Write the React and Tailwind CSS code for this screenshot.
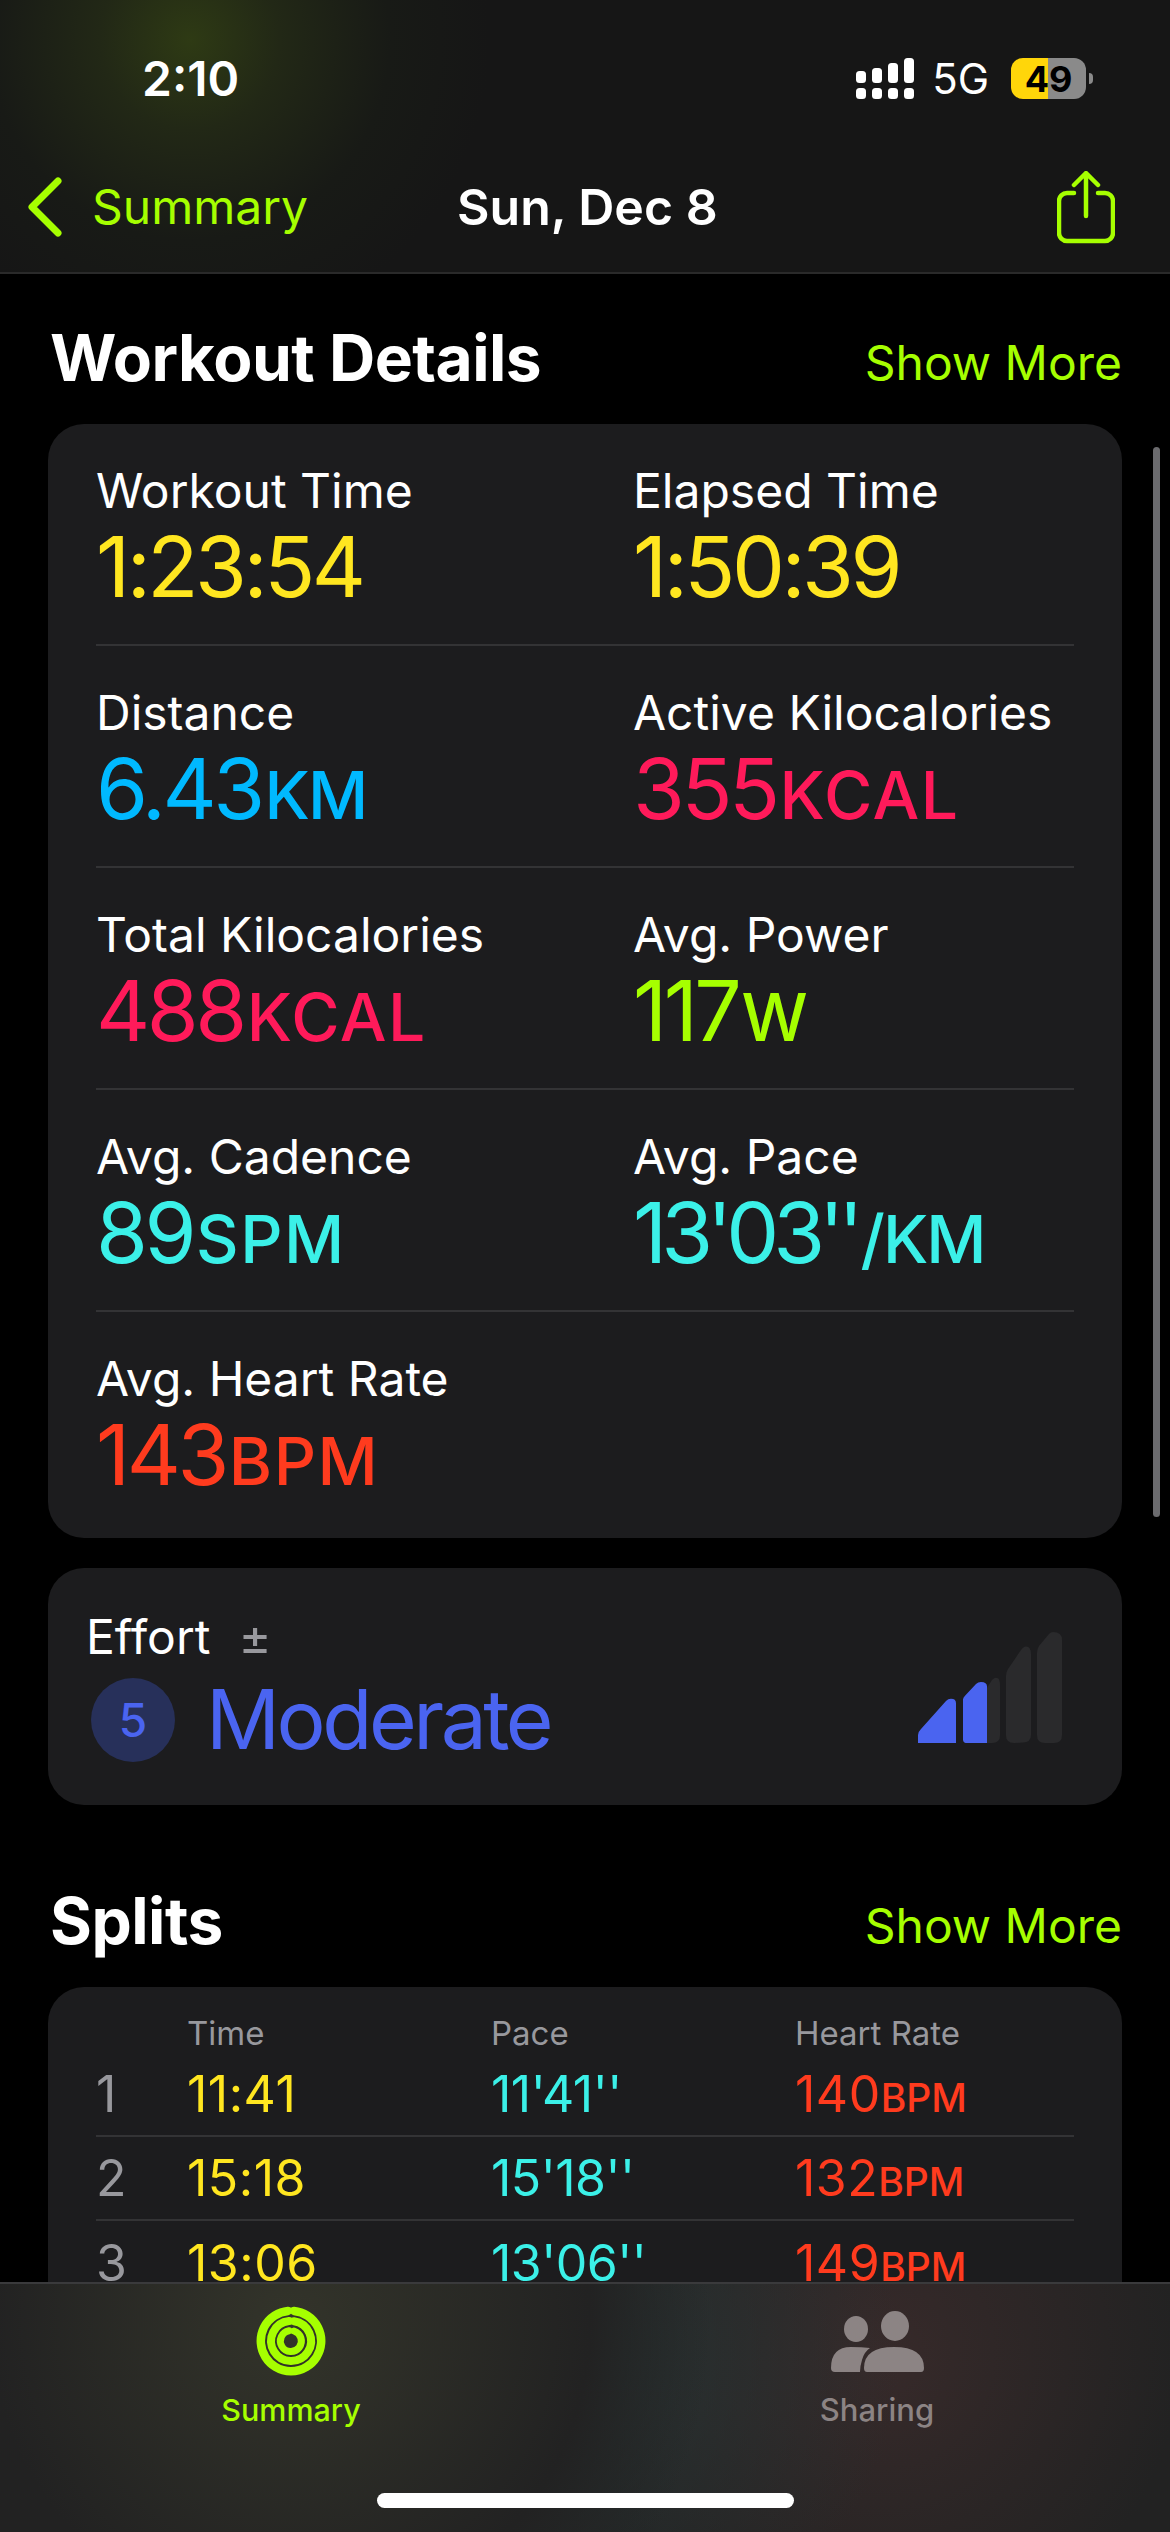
import React from 'react';

const metrics = [
  [
    { label: 'Workout Time', value: '1:23:54', color: 'text-[#ffe620]' },
    { label: 'Elapsed Time', value: '1:50:39', color: 'text-[#ffe620]' },
  ],
  [
    { label: 'Distance', value: '6.43', unit: 'KM', color: 'text-[#00b9ff]', unitTight: true },
    { label: 'Active Kilocalories', value: '355', unit: 'KCAL', color: 'text-[#ff1a5a]' },
  ],
  [
    { label: 'Total Kilocalories', value: '488', unit: 'KCAL', color: 'text-[#ff1a5a]' },
    { label: 'Avg. Power', value: '117', unit: 'W', color: 'text-[#a6ff00]' },
  ],
  [
    { label: 'Avg. Cadence', value: '89', unit: 'SPM', color: 'text-[#3bf0e8]' },
    { label: 'Avg. Pace', value: "13'03''", unit: '/KM', color: 'text-[#3bf0e8]', tight: true, unitTight: true },
  ],
  [{ label: 'Avg. Heart Rate', value: '143', unit: 'BPM', color: 'text-[#ff3b1e]' }],
];

const splits = [
  { n: 1, time: '11:41', pace: "11'41''", hr: '140' },
  { n: 2, time: '15:18', pace: "15'18''", hr: '132' },
  { n: 3, time: '13:06', pace: "13'06''", hr: '149' },
];

function SignalIcon() {
  return (
    <svg width="58" height="41" viewBox="0 0 58 41" fill="white">
      <rect x="0" y="13" width="10" height="12" rx="3.5" />
      <rect x="16" y="10" width="10" height="15" rx="3.5" />
      <rect x="32" y="5" width="10" height="20" rx="3.5" />
      <rect x="48" y="0" width="10" height="25" rx="3.5" />
      <rect x="0" y="30" width="10" height="11" rx="3.5" />
      <rect x="16" y="30" width="10" height="11" rx="3.5" />
      <rect x="32" y="30" width="10" height="11" rx="3.5" />
      <rect x="48" y="30" width="10" height="11" rx="3.5" />
    </svg>
  );
}

function ShareIcon() {
  return (
    <svg width="58" height="73" viewBox="0 0 58 73" fill="none" stroke="#a6ff00" strokeWidth="4.5" strokeLinecap="round" strokeLinejoin="round">
      <path d="M17 22H10a8 8 0 0 0-8 8v32a8 8 0 0 0 8 8h38a8 8 0 0 0 8-8V30a8 8 0 0 0-8-8h-7" />
      <path d="M29 45V3M17 14 29 2l12 12" />
    </svg>
  );
}

function EffortBars() {
  return (
    <svg width="144" height="111" viewBox="0 0 144 111">
      <g fill="#2a2a2c">
        <path d="M60 111V70l14-22q3-3 5-2 3 0 3 8v49q0 8-8 8z" />
        <path d="M96 111q-8 0-8-8V44q0-4 2-7l13-19q3-4 5-3.500 5 0 5 8v80q0 8-8 8z" />
        <path d="M127 111q-8 0-8-8V21q0-4 2-7l10-12q2-2 4-2 9 0 9 8v95q0 8-8 8z" />
      </g>
      <path d="M0 111V100q0-4 3-8l25-38q2-3 5-3 5 0 5 6v54z" fill="#4a64f0" transform="translate(0 29) scale(1 0.74)" />
      <path d="M49 111q-4 0-4-6V44q0-3 2-6l11-18q2-3 5-3 6 0 6 7v87z" fill="#4a64f0" transform="translate(0 39) scale(1 0.65)" />
    </svg>
  );
}

function RingsIcon() {
  return (
    <svg width="70" height="70" viewBox="0 0 70 70" fill="none" stroke="#a6ff00" strokeLinecap="round">
      <path d="M38 4.9A30.200 30.200 0 1 1 32 4.900" strokeWidth="8.500" />
      <path d="M38 15.200A20 20 0 1 1 33 15.100" strokeWidth="8" />
      <path d="M38 25A10.500 10.500 0 1 1 33 24.700" strokeWidth="7" />
    </svg>
  );
}

function PeopleIcon() {
  return (
    <svg width="93" height="61" viewBox="0 0 93 61" fill="#8c8484">
      <ellipse cx="25" cy="18" rx="12" ry="13" />
      <ellipse cx="64" cy="15" rx="14" ry="15" />
      <path d="M39 37q-6 4-8 12-2 6-2 12H4q-4 0-4-4 0-21 20-21 11 0 19 1z" />
      <path d="M36 61q-3 0-3-4 0-21 30-21t30 21q0 4-3 4z" />
    </svg>
  );
}

function Metric({ label, value, unit, color, tight, unitTight }) {
  return (
    <div className="min-w-0">
      <div className="text-[48px] leading-[52px] text-white">{label}</div>
      <div className={`mt-[5px] flex items-baseline text-[84px] leading-[90px] ${tight ? 'tracking-[-6px]' : 'tracking-[-3.5px]'} ${color}`}>
        <span>{value}</span>
        {unit && <span className={`ml-[3px] text-[66px] font-medium ${unitTight ? 'tracking-[-2px]' : 'tracking-[1.5px]'}`}>{unit}</span>}
      </div>
    </div>
  );
}

export default function App() {
  return (
    <div className="relative flex h-[2532px] w-[1170px] flex-col overflow-hidden bg-black font-['Inter',sans-serif]">
      <header className="h-[274px] shrink-0 border-b-2 border-[#2a2a2a] bg-[#161616] bg-[radial-gradient(circle_at_190px_40px,#2e3a14_0,#222816_90px,#181a16_200px,#161616_300px)]">
        <div className="flex h-[157px] items-center justify-between pl-[142px] pr-[77px]">
          <span className="text-[48px] font-semibold leading-none text-white">2:10</span>
          <div className="flex items-center">
            <SignalIcon />
            <span className="ml-[18px] text-[42px] leading-none text-white">5G</span>
            <div className="ml-[22px] flex h-[41px] w-[75px] items-center justify-center rounded-[12px] bg-[linear-gradient(90deg,#ffd60a_49%,#8a8a8a_49%)] text-[36px] font-bold leading-none text-black">49</div>
            <div className="ml-[3px] h-[11px] w-[4px] rounded-r-full bg-[#8a8a8a]" />
          </div>
        </div>
        <div className="flex h-[100px] items-center justify-between pl-[28px] pr-[55px]">
          <div className="flex w-[300px] items-center">
            <svg width="34" height="60" viewBox="0 0 34 60" fill="none" stroke="#a6ff00" strokeWidth="7" strokeLinecap="round" strokeLinejoin="round">
              <path d="M30 4 4 30l26 26" />
            </svg>
            <span className="ml-[30px] text-[48px] leading-none text-[#a6ff00]">Summary</span>
          </div>
          <span className="ml-[129px] text-[50px] font-semibold leading-none text-white">Sun, Dec 8</span>
          <div className="ml-auto"><ShareIcon /></div>
        </div>
      </header>

      <main className="flex-1 overflow-hidden px-[48px] pt-[48px]">
        <div className="flex h-[72px] items-center justify-between pl-[2px]">
          <h2 className="text-[64px] font-bold leading-[72px] tracking-[-0.5px] text-white">Workout Details</h2>
          <span className="translate-y-[5px] text-[48px] leading-[72px] text-[#a6ff00]">Show More</span>
        </div>

        <section className="mt-[30px] rounded-[36px] bg-[#1c1c1e] px-[48px] pb-[4px]">
          {metrics.map((row, i) => (
            <div key={row[0].label} className={`grid h-[222px] grid-cols-[537px_1fr] items-start pt-[41px] ${i < metrics.length - 1 ? 'border-b-2 border-[#333335]' : ''}`}>
              {row.map((m) => (
                <Metric key={m.label} {...m} />
              ))}
            </div>
          ))}
        </section>

        <section className="mt-[30px] flex h-[237px] items-end justify-between rounded-[36px] bg-[#1c1c1e] pb-[43px] pl-[38px] pr-[60px]">
          <div>
            <div className="flex items-center text-[48px] leading-[54px] text-white">
              Effort
              <span className="ml-[28px] text-[50px] leading-none text-[#98989d]">±</span>
            </div>
            <div className="mt-[14px] flex items-center">
              <div className="ml-[5px] flex h-[84px] w-[84px] items-center justify-center rounded-full bg-[#27305a] text-[46px] font-medium leading-none text-[#4a64f0]">5</div>
              <span className="ml-[31px] text-[82px] leading-[84px] tracking-[-3.5px] text-[#4a64f0]">Moderate</span>
            </div>
          </div>
          <div className="mb-[19px]"><EffortBars /></div>
        </section>

        <div className="mt-[80px] flex h-[72px] items-center justify-between pl-[2px]">
          <h2 className="text-[64px] font-bold leading-[72px] tracking-[-0.5px] text-white">Splits</h2>
          <span className="translate-y-[5px] text-[48px] leading-[72px] text-[#a6ff00]">Show More</span>
        </div>

        <section className="mt-[30px] rounded-[36px] bg-[#1c1c1e] px-[48px] pb-[40px] pt-[26px]">
          <div className="grid grid-cols-[91px_304px_304px_1fr] text-[33px] leading-[40px] text-[#98989d]">
            <span />
            <span>Time</span>
            <span>Pace</span>
            <span>Heart Rate</span>
          </div>
          {splits.map((s, i) => (
            <div key={s.n} className={`grid h-[84px] grid-cols-[91px_304px_304px_1fr] items-center text-[50px] leading-none tracking-[0.5px] ${i < splits.length - 1 ? 'border-b-2 border-[#333335]' : ''}`}>
              <span className="text-[#98989d]">{s.n}</span>
              <span className="text-[#ffe620]">{s.time}</span>
              <span className="tracking-[-0.5px] text-[#3bf0e8]">{s.pace}</span>
              <span className="flex items-baseline text-[#ff3b1e]">
                {s.hr}
                <span className="text-[39px] font-medium tracking-[0px]">BPM</span>
              </span>
            </div>
          ))}
        </section>
      </main>

      <div className="absolute right-[10px] top-[447px] h-[1070px] w-[7px] rounded-full bg-[#6b6b6e]" />

      <nav className="absolute bottom-0 left-0 h-[250px] w-full border-t-2 border-[#3a3a3c] bg-[#222222] bg-[radial-gradient(circle_at_290px_40px,#33342a_0,#222222_300px,transparent_420px),radial-gradient(circle_at_600px_70px,#283232_0,transparent_300px),radial-gradient(circle_at_880px_70px,#372a2a_0,#222222_300px)]">
        <div className="grid grid-cols-[582px_590px] pt-[20px]">
          <div className="flex flex-col items-center">
            <div className="flex h-[74px] items-center"><RingsIcon /></div>
            <span className="mt-[14px] text-[30.500px] font-medium leading-[36px] text-[#a6ff00]">Summary</span>
          </div>
          <div className="flex flex-col items-center">
            <div className="flex h-[74px] items-center"><PeopleIcon /></div>
            <span className="mt-[14px] text-[31px] font-medium leading-[36px] text-[#8c8484]">Sharing</span>
          </div>
        </div>
        <div className="absolute bottom-[24px] left-[377px] h-[15px] w-[417px] rounded-full bg-white" />
      </nav>
    </div>
  );
}
